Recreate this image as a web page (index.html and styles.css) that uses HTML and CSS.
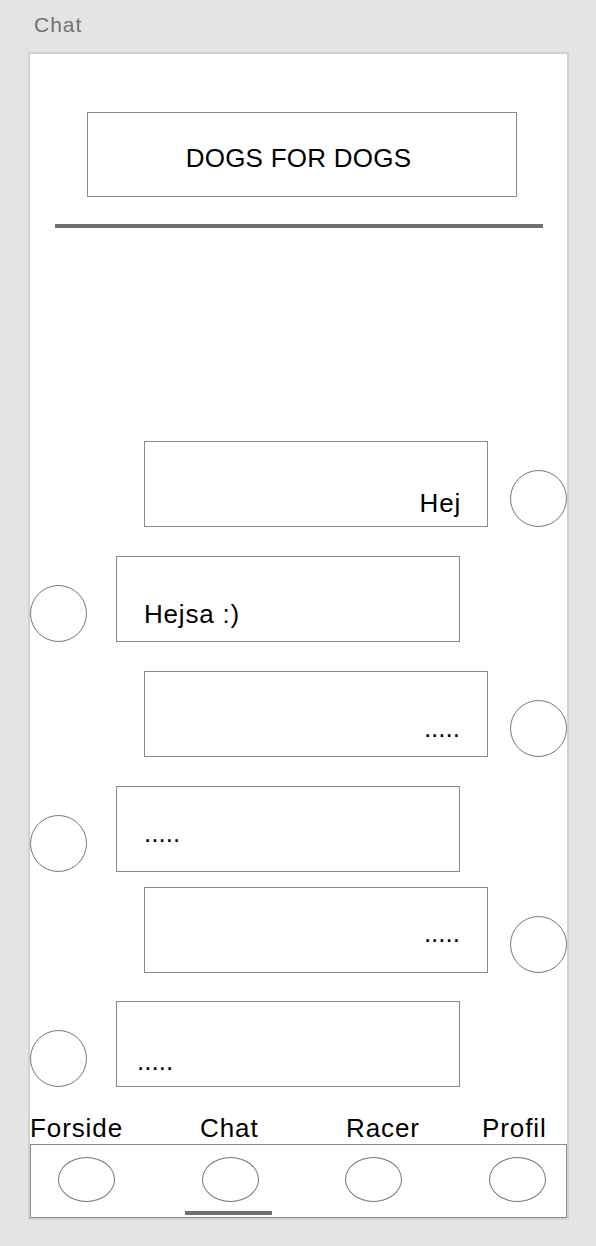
FILE: index.html
```html
<!DOCTYPE html>
<html lang="da">
<head>
<meta charset="utf-8">
<title>Chat</title>
<link rel="stylesheet" href="styles.css">
</head>
<body>
  <div class="page-title">Chat</div>
  <main class="artboard">
    <div class="brand-box">DOGS FOR DOGS</div>
    <div class="divider"></div>

    <section class="messages">
      <div class="row row-right">
        <div class="bubble bubble-right pt-46">Hej</div>
        <div class="avatar"></div>
      </div>
      <div class="row row-left">
        <div class="avatar"></div>
        <div class="bubble bubble-left pt-42">Hejsa :)</div>
      </div>
      <div class="row row-right">
        <div class="bubble bubble-right dots pt-41">.....</div>
        <div class="avatar"></div>
      </div>
      <div class="row row-left">
        <div class="avatar"></div>
        <div class="bubble bubble-left dots pt-31">.....</div>
      </div>
      <div class="row row-right tight">
        <div class="bubble bubble-right dots pt-30">.....</div>
        <div class="avatar"></div>
      </div>
      <div class="row row-left last">
        <div class="avatar"></div>
        <div class="bubble bubble-left narrow dots pt-44">.....</div>
      </div>
    </section>

    <nav class="nav">
      <div class="nav-labels">
        <span>Forside</span>
        <span>Chat</span>
        <span>Racer</span>
        <span>Profil</span>
      </div>
      <div class="nav-bar">
        <div class="nav-icons">
          <div class="nav-oval"></div>
          <div class="nav-oval"></div>
          <div class="nav-oval"></div>
          <div class="nav-oval"></div>
        </div>
        <div class="nav-indicator"></div>
      </div>
    </nav>
  </main>
</body>
</html>
```

FILE: styles.css
```css
* { box-sizing: border-box; }

html, body {
  margin: 0;
  padding: 0;
}

body {
  background: #e4e4e4;
  font-family: "Liberation Sans", Arial, sans-serif;
  color: #000;
  width: 596px;
  height: 1246px;
  overflow: hidden;
}

.page-title {
  padding: 13px 0 0 34px;
  font-size: 21px;
  line-height: 24px;
  letter-spacing: 1px;
  color: #707070;
}

.artboard {
  margin: 15px 0 0 28px;
  width: 541px;
  height: 1168px;
  background: #fff;
  border: 2px solid #d2d2d2;
  display: flex;
  flex-direction: column;
}

.brand-box {
  margin: 58px 0 0 57px;
  width: 430px;
  height: 85px;
  border: 1px solid #8a8a8a;
  padding: 30px 7px 0 0;
  text-align: center;
  font-size: 26px;
  line-height: 30px;
  letter-spacing: 0.25px;
}

.divider {
  margin: 27px 0 0 25px;
  width: 488px;
  height: 4px;
  background: #707070;
}

.messages {
  margin-top: 213px;
  display: flex;
  flex-direction: column;
}

.row {
  display: flex;
  align-items: flex-end;
  height: 86px;
  margin-top: 29px;
}
.row:first-child { margin-top: 0; }
.row.tight { margin-top: 15px; }
.row.last { margin-top: 28px; }

.row-right {
  padding-left: 114px;
  gap: 22px;
}
.row-left {
  gap: 29px;
}

.bubble {
  width: 344px;
  height: 86px;
  border: 1px solid #8a8a8a;
  font-size: 26px;
  line-height: 30px;
  letter-spacing: 0.8px;
  white-space: nowrap;
}
.bubble.dots {
  letter-spacing: 0;
}
.bubble-right {
  text-align: right;
  padding-right: 26px;
}
.bubble-right.dots {
  padding-right: 27px;
}
.bubble-left {
  padding-left: 27px;
}
.bubble-left.narrow {
  padding-left: 20px;
}

.pt-46 { padding-top: 46px; }
.pt-44 { padding-top: 44px; }
.pt-42 { padding-top: 42px; }
.pt-41 { padding-top: 41px; }
.pt-31 { padding-top: 31px; }
.pt-30 { padding-top: 30px; }

.avatar {
  width: 57px;
  height: 57px;
  flex: none;
  border: 1px solid #767676;
  border-radius: 50%;
}

.nav {
  margin-top: auto;
  display: flex;
  flex-direction: column;
}

.nav-labels {
  display: grid;
  grid-template-columns: 170px 146px 136px 1fr;
  font-size: 26px;
  line-height: 30px;
  letter-spacing: 0.9px;
}

.nav-bar {
  margin-top: 1px;
  height: 74px;
  border: 1px solid #8a8a8a;
  padding-top: 12px;
}

.nav-icons {
  display: flex;
  gap: 86.5px;
  padding-left: 27px;
}

.nav-oval {
  width: 57px;
  height: 45px;
  border: 1px solid #767676;
  border-radius: 50%;
}

.nav-indicator {
  margin: 9px 0 0 154px;
  width: 87px;
  height: 4px;
  background: #707070;
}
```
